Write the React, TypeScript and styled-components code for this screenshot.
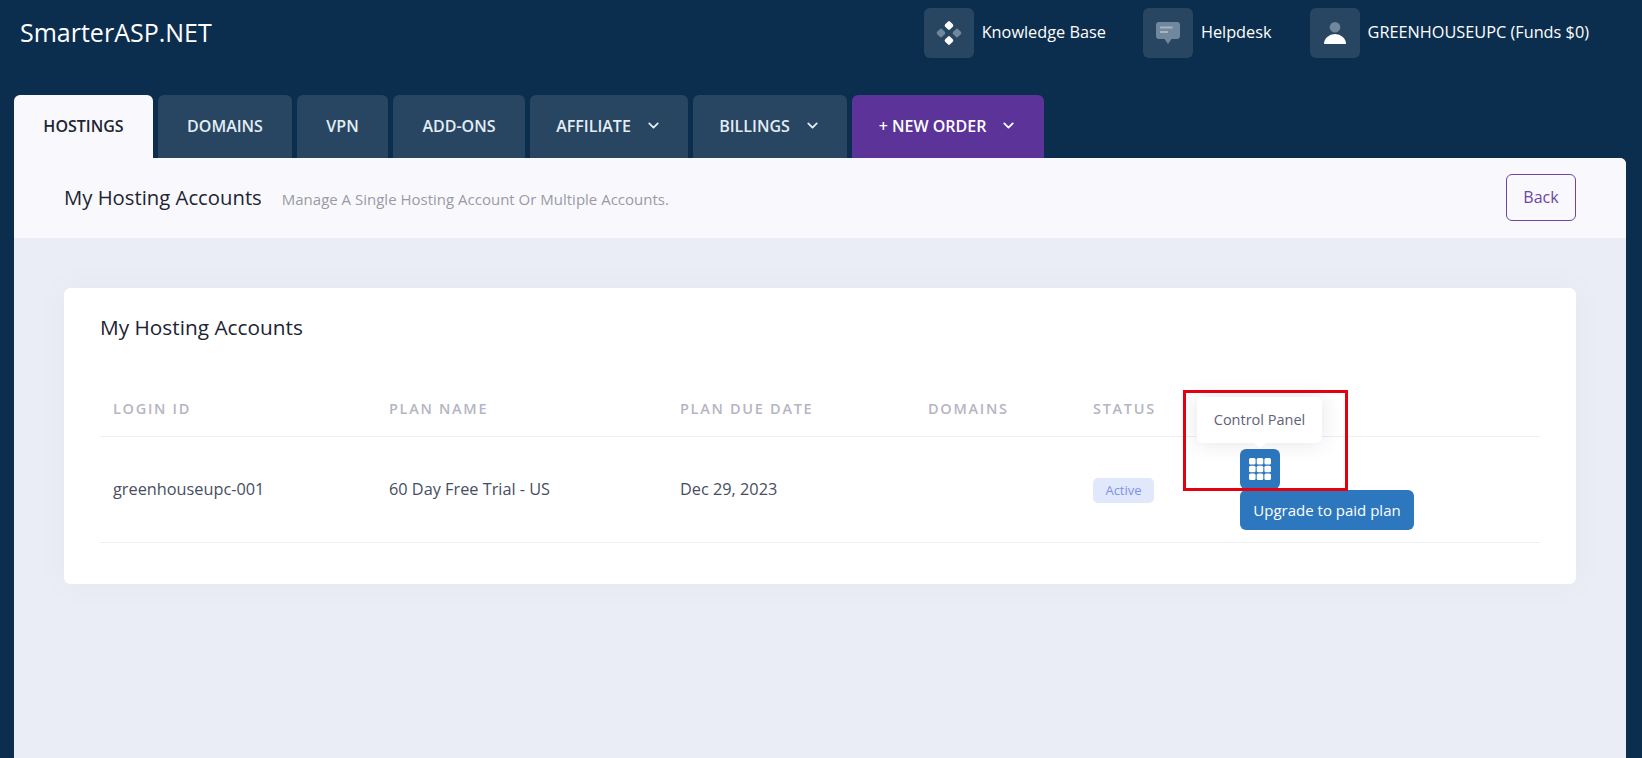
import { ChevronDown } from 'lucide-react';
import styled, { createGlobalStyle } from 'styled-components';

const GlobalStyle = createGlobalStyle`
  html, body {
    margin: 0;
    height: 100%;
    overflow: hidden;
    background: #0c2e4e;
    font-family: 'Open Sans', 'Liberation Sans', sans-serif;
  }
  * {
    box-sizing: border-box;
  }
`;

const tabs = [
  { label: 'HOSTINGS', width: 144, variant: 'active' },
  { label: 'DOMAINS', width: 139, variant: 'default' },
  { label: 'VPN', width: 96, variant: 'default' },
  { label: 'ADD-ONS', width: 137, variant: 'default' },
  { label: 'AFFILIATE', width: 163, variant: 'default', menu: true },
  { label: 'BILLINGS', width: 159, variant: 'default', menu: true },
  { label: '+ NEW ORDER', width: 197, variant: 'order', menu: true },
] as const;

function KnowledgeIcon() {
  return (
    <svg width='26' height='26' viewBox='0 0 26 26'>
      <rect x='1.5' y='9.5' width='7' height='7' rx='1.6' fill='#71879d' transform='rotate(45 5 13)' />
      <rect x='17.5' y='9.5' width='7' height='7' rx='1.6' fill='#71879d' transform='rotate(45 21 13)' />
      <rect x='9.5' y='2' width='7' height='7' rx='1.6' fill='#fff' transform='rotate(45 13 5.5)' />
      <rect x='9.5' y='17' width='7' height='7' rx='1.6' fill='#fff' transform='rotate(45 13 20.5)' />
    </svg>
  );
}

function HelpdeskIcon() {
  return (
    <svg width='24' height='22' viewBox='0 0 24 22'>
      <path
        d='M3 0 H21 A3 3 0 0 1 24 3 V14 A3 3 0 0 1 21 17 H15.5 L12 22 L8.5 17 H3 A3 3 0 0 1 0 14 V3 A3 3 0 0 1 3 0 Z'
        fill='#71879d'
      />
      <rect x='4' y='4.5' width='12.5' height='2' fill='#a5b3c1' />
      <rect x='4' y='9' width='8' height='2' fill='#a5b3c1' />
    </svg>
  );
}

function UserIcon() {
  return (
    <svg width='22' height='22' viewBox='0 0 22 22'>
      <circle cx='11' cy='5.3' r='5.3' fill='#71879d' />
      <path d='M0 22 A11 10 0 0 1 22 22 Z' fill='#fff' />
    </svg>
  );
}

function GridIcon() {
  const cells = [0, 7.7, 15.4];
  return (
    <svg width='22' height='22' viewBox='0 0 22 22'>
      {cells.map((y) =>
        cells.map((x) => (
          <rect key={`${x}-${y}`} x={x} y={y} width='6.6' height='6.6' rx='1.6' fill='#fff' />
        )),
      )}
    </svg>
  );
}

function App() {
  return (
    <Page>
      <GlobalStyle />
      <TopBar>
        <Logo>SmarterASP.NET</Logo>
        <TopLinks>
          <TopLink $gap={37}>
            <IconBox>
              <KnowledgeIcon />
            </IconBox>
            <TopLabel>Knowledge Base</TopLabel>
          </TopLink>
          <TopLink $gap={38}>
            <IconBox>
              <HelpdeskIcon />
            </IconBox>
            <TopLabel>Helpdesk</TopLabel>
          </TopLink>
          <TopLink $gap={0}>
            <IconBox>
              <UserIcon />
            </IconBox>
            <TopLabel>GREENHOUSEUPC (Funds $0)</TopLabel>
          </TopLink>
        </TopLinks>
      </TopBar>

      <TabRow>
        {tabs.map((tab) => (
          <Tab key={tab.label} $width={tab.width} $variant={tab.variant}>
            {tab.label}
            {'menu' in tab && <ChevronDown size={17} strokeWidth={2.5} />}
          </Tab>
        ))}
      </TabRow>

      <Panel>
        <PanelHeader>
          <PanelTitle>My Hosting Accounts</PanelTitle>
          <PanelHint>Manage A Single Hosting Account Or Multiple Accounts.</PanelHint>
          <BackButton>Back</BackButton>
        </PanelHeader>

        <PanelBody>
          <Card>
            <CardTitle>My Hosting Accounts</CardTitle>
            <HeadRow>
              <HeadCell>LOGIN ID</HeadCell>
              <HeadCell>PLAN NAME</HeadCell>
              <HeadCell>PLAN DUE DATE</HeadCell>
              <HeadCell>DOMAINS</HeadCell>
              <HeadCell>STATUS</HeadCell>
              <HeadCell />
            </HeadRow>
            <BodyRow>
              <Cell>greenhouseupc-001</Cell>
              <Cell>60 Day Free Trial - US</Cell>
              <Cell>Dec 29, 2023</Cell>
              <Cell />
              <StatusCell>
                <StatusBadge>Active</StatusBadge>
              </StatusCell>
              <ActionCell>
                <Tooltip>Control Panel</Tooltip>
                <PanelButton>
                  <GridIcon />
                </PanelButton>
                <UpgradeButton>Upgrade to paid plan</UpgradeButton>
                <Highlight />
              </ActionCell>
            </BodyRow>
          </Card>
        </PanelBody>
      </Panel>
    </Page>
  );
}

const Page = styled.div`
  height: 758px;
  display: flex;
  flex-direction: column;
  padding: 0 16px 0 14px;
  background: #0c2e4e;
  overflow: hidden;
`;

const TopBar = styled.header`
  height: 95px;
  flex: none;
  display: flex;
  justify-content: space-between;
  align-items: flex-start;
  padding: 8px 0 0 6px;
`;

const Logo = styled.div`
  margin-top: 7px;
  font-size: 25px;
  line-height: 34px;
  color: #fff;
`;

const TopLinks = styled.nav`
  display: flex;
  padding-right: 37px;
`;

const TopLink = styled.a<{ $gap: number }>`
  display: flex;
  align-items: center;
  gap: 8px;
  margin-right: ${(props) => props.$gap}px;
  color: #fff;
`;

const TopLabel = styled.span`
  margin-top: -2px;
  font-size: 16.3px;
`;

const IconBox = styled.span`
  width: 50px;
  height: 50px;
  display: flex;
  align-items: center;
  justify-content: center;
  border-radius: 6px;
  background: #284661;
`;

const TabRow = styled.nav`
  height: 63px;
  flex: none;
  display: flex;
`;

const tabBackground = {
  active: '#f9f9fd',
  default: '#284661',
  order: '#5b3399',
};

const Tab = styled.a<{ $width: number; $variant: 'active' | 'default' | 'order' }>`
  width: ${(props) => props.$width - 5}px;
  margin-right: 5px;
  display: flex;
  align-items: center;
  justify-content: center;
  gap: 14px;
  padding-bottom: 2px;
  border-radius: 6px 6px 0 0;
  font-size: 16px;
  font-weight: 600;
  color: ${(props) =>
    props.$variant === 'active' ? '#1d2433' : props.$variant === 'order' ? '#fff' : '#e3edf6'};
  background: ${(props) => tabBackground[props.$variant]};
`;

const Panel = styled.main`
  flex: 1;
  display: flex;
  flex-direction: column;
  border-radius: 0 6px 0 0;
  background: #ebedf6;
  overflow: hidden;
`;

const PanelHeader = styled.div`
  height: 80px;
  flex: none;
  display: flex;
  align-items: center;
  padding: 0 50px 2px;
  background: #f9f9fd;
`;

const PanelTitle = styled.h1`
  margin: 0;
  font-size: 20.3px;
  font-weight: 400;
  color: #1d2433;
`;

const PanelHint = styled.span`
  margin-left: 20px;
  padding-top: 3px;
  font-size: 15px;
  color: #9a9aa6;
`;

const BackButton = styled.button`
  width: 70px;
  height: 47px;
  margin-left: auto;
  border: 1px solid #6b46a3;
  border-radius: 6px;
  background: transparent;
  font-family: inherit;
  font-size: 16px;
  color: #6b46a3;
`;

const PanelBody = styled.div`
  flex: 1;
  padding: 50px 50px 0;
`;

const Card = styled.section`
  height: 296px;
  padding: 25px 36px 0;
  border-radius: 6px;
  background: #fff;
  box-shadow: 0 0 30px rgba(80, 90, 140, 0.05);
`;

const CardTitle = styled.h2`
  margin: 0;
  font-size: 20.8px;
  line-height: 28px;
  font-weight: 400;
  color: #1d2433;
`;

const columns = '276px 291px 248px 165px 148px 1fr';

const HeadRow = styled.div`
  height: 85px;
  margin-top: 11px;
  padding-top: 45px;
  display: grid;
  grid-template-columns: ${columns};
  border-bottom: 1px solid #edeff4;
`;

const HeadCell = styled.div`
  padding-left: 13px;
  font-size: 14.5px;
  line-height: 24px;
  font-weight: 600;
  letter-spacing: 1.7px;
  color: #b5b5c3;
`;

const BodyRow = styled.div`
  height: 106px;
  display: grid;
  grid-template-columns: ${columns};
  align-items: center;
  border-bottom: 1px solid #edeff4;
`;

const Cell = styled.div`
  padding: 0 0 2px 13px;
  font-size: 16.3px;
  color: #464e5f;
`;

const StatusCell = styled.div`
  padding: 2px 0 0 13px;
`;

const StatusBadge = styled.span`
  display: block;
  width: 61px;
  height: 25px;
  border-radius: 5px;
  background: #e1e8fb;
  font-size: 13px;
  line-height: 25px;
  text-align: center;
  color: #7d93e8;
`;

const ActionCell = styled.div`
  position: relative;
  align-self: stretch;
  padding: 12px 0 0 12px;
`;

const PanelButton = styled.button`
  width: 40px;
  height: 40px;
  display: flex;
  align-items: center;
  justify-content: center;
  padding: 0;
  border: 0;
  border-radius: 6px;
  background: #2c77bd;
`;

const UpgradeButton = styled.button`
  width: 174px;
  height: 40px;
  display: block;
  margin-top: 1px;
  padding: 0;
  border: 0;
  border-radius: 6px;
  background: #2c77bd;
  font-family: inherit;
  font-size: 15px;
  color: #fff;
`;

const Tooltip = styled.div`
  position: absolute;
  top: -40px;
  left: -31px;
  width: 125px;
  height: 46px;
  border-radius: 5px;
  background: #fff;
  box-shadow: 0 0 20px rgba(82, 63, 105, 0.15);
  font-size: 14.5px;
  line-height: 46px;
  text-align: center;
  color: #5e6278;

  &::after {
    content: '';
    position: absolute;
    left: 57px;
    bottom: -5px;
    border-left: 6px solid transparent;
    border-right: 6px solid transparent;
    border-top: 5px solid #fff;
  }
`;

const Highlight = styled.div`
  position: absolute;
  top: -47px;
  left: -45px;
  width: 165px;
  height: 101px;
  border: 3px solid #e3000f;
  pointer-events: none;
`;

export default App;
